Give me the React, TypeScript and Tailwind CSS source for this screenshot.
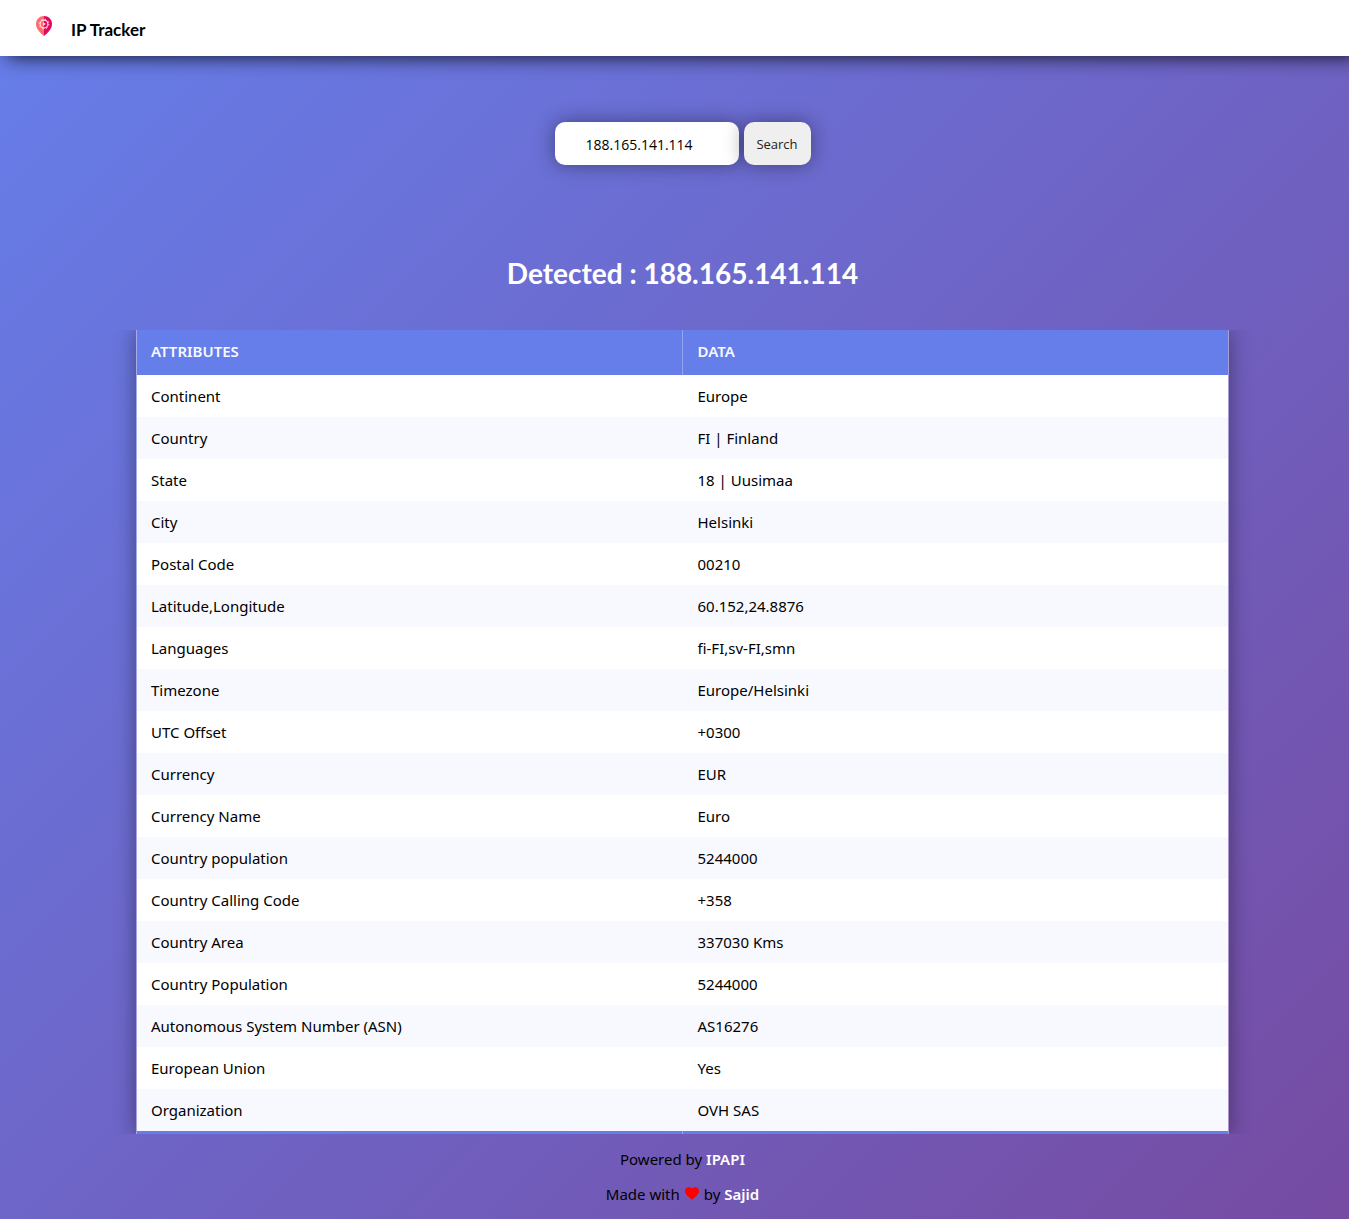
import { useState } from "react";

const rows: [string, string][] = [
  ["Continent", "Europe"],
  ["Country", "FI | Finland"],
  ["State", "18 | Uusimaa"],
  ["City", "Helsinki"],
  ["Postal Code", "00210"],
  ["Latitude,Longitude", "60.152,24.8876"],
  ["Languages", "fi-FI,sv-FI,smn"],
  ["Timezone", "Europe/Helsinki"],
  ["UTC Offset", "+0300"],
  ["Currency", "EUR"],
  ["Currency Name", "Euro"],
  ["Country population", "5244000"],
  ["Country Calling Code", "+358"],
  ["Country Area", "337030 Kms"],
  ["Country Population", "5244000"],
  ["Autonomous System Number (ASN)", "AS16276"],
  ["European Union", "Yes"],
  ["Organization", "OVH SAS"],
];

function PinLogo() {
  return (
    <svg viewBox="0 0 16 20" className="h-5 w-4" aria-hidden="true">
      <path d="M8 0C3.6 0 0 3.5 0 7.9 0 12.700 4 16.500 8 20Z" fill="#ff6b6b" />
      <path d="M8 0c4.400 0 8 3.500 8 7.900C16 12.700 12 16.500 8 20Z" fill="#e3075f" />
      <circle cx="8" cy="8" r="3.900" fill="none" stroke="#ffe3ea" strokeWidth="1.100" />
      <circle cx="8" cy="8" r="4.900" fill="none" stroke="#ffe3ea" strokeWidth="1" strokeDasharray="1.500 2.348" />
      <path d="M7 6.200 10 8 7 9.800Z" fill="#ffe3ea" />
    </svg>
  );
}

function Heart() {
  return (
    <svg viewBox="0 0 14 13" className="mx-[5px] inline-block h-[13px] w-3.5 align-baseline" role="img" aria-label="love">
      <path d="M7 12.800C5 11 0 8 0 4 0 1.500 1.700.3 3.700.3 5 .3 6.200.7 7 1.500 7.800.7 9 .3 10.300.3 12.300.3 14 1.500 14 4c0 4-5 7-7 8.800Z" fill="#ff0000" />
    </svg>
  );
}

export default function App() {
  const [ip, setIp] = useState("188.165.141.114");
  return (
    <div className="min-h-screen overflow-x-hidden bg-[linear-gradient(135deg,#667eea_0%,#764ba2_100%)] font-['Noto_Sans',sans-serif] text-black">
      <header className="flex h-14 items-center bg-white pl-9 shadow-[8px_0_20px_rgba(0,0,0,0.9)]">
        <a href="#" className="flex items-center gap-[19px]">
          <span className="-mt-1">
            <PinLogo />
          </span>
          <span className="mt-1 font-['Lato',sans-serif] text-[17px] font-bold">IP Tracker</span>
        </a>
      </header>
      <main className="pt-[66px] pl-4">
        <form className="flex justify-center gap-[5px] font-['Open_Sans',sans-serif]" onSubmit={(e) => e.preventDefault()}>
          <input
            aria-label="IP address"
            value={ip}
            onChange={(e) => setIp(e.target.value)}
            className="h-[43px] w-46 rounded-[10px] bg-white pt-0.5 pr-3 pl-[31px] text-sm shadow-[0_0_20px_rgba(0,0,0,0.4)] outline-none"
          />
          <button type="submit" className="h-[43px] w-[67px] rounded-[10px] bg-[#efefef] pt-0.5 text-[13px] text-[#222222] shadow-[0_0_20px_rgba(0,0,0,0.4)]">
            Search
          </button>
        </form>
        <h1 className="mt-[84px] text-center font-['Lato',sans-serif] text-[28px] leading-12 font-bold text-white">
          Detected : 188.165.141.114
        </h1>
        <div className="mt-[33px] px-[120px]">
          <table className="w-full table-fixed border-separate border-spacing-0 border-x border-white/40 text-[15px] shadow-[0_0_20px_rgba(0,0,0,0.4)] [clip-path:inset(0_-30px)]">
            <thead>
              <tr className="h-[45px] bg-[#667eea] text-left text-[#f8f9ff]">
                <th className="border-r border-white/30 px-3.5 pb-0.5 font-semibold">ATTRIBUTES</th>
                <th className="px-[15px] pb-0.5 font-semibold">DATA</th>
              </tr>
            </thead>
            <tbody>
              {rows.map(([label, value]) => (
                <tr key={label} className="h-[42px] bg-white even:bg-[#f8f9ff]">
                  <td className="px-3.5">{label}</td>
                  <td className="px-[15px]">{value}</td>
                </tr>
              ))}
            </tbody>
            <tfoot>
              <tr className="h-[3px] bg-[#667eea]">
                <td className="border-r border-white/30 p-0" />
                <td className="p-0" />
              </tr>
            </tfoot>
          </table>
        </div>
        <footer className="pt-2 text-center text-[15px] leading-[35px]">
          <p>
            Powered by <a href="#" className="font-semibold text-white">IPAPI</a>
          </p>
          <p>
            Made with<Heart />by <a href="#" className="font-semibold text-white">Sajid</a>
          </p>
        </footer>
      </main>
    </div>
  );
}
